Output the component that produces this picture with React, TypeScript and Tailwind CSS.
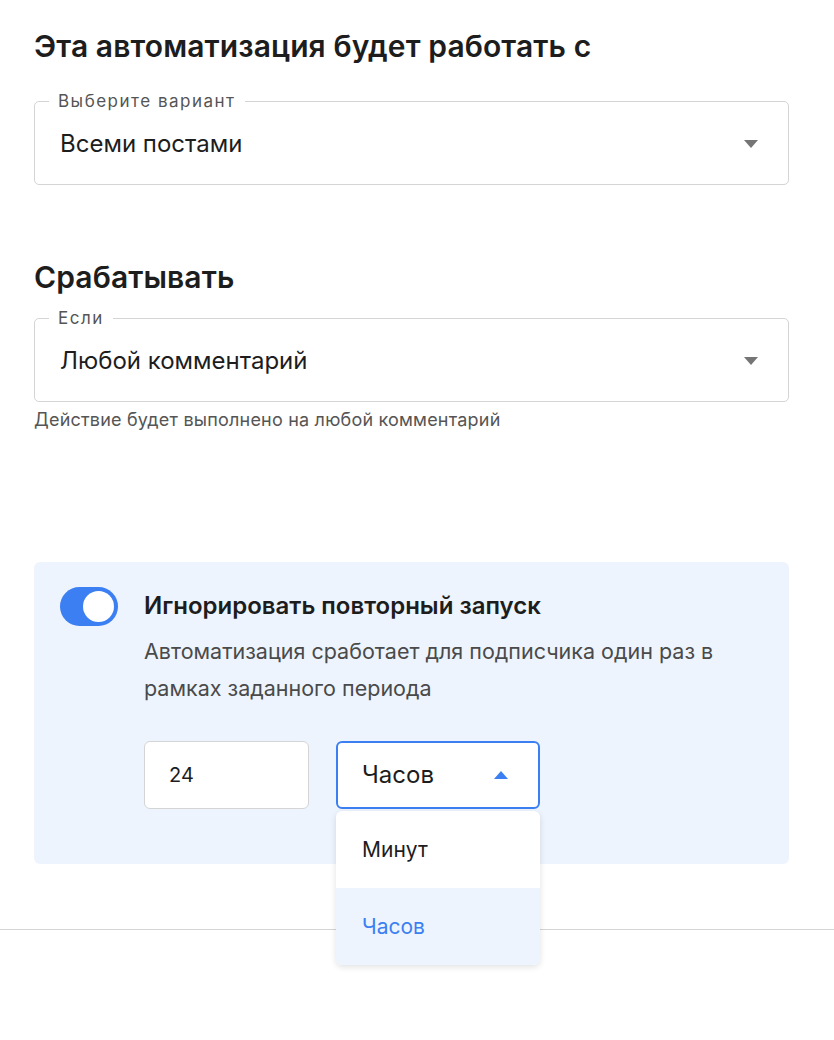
import { useState } from 'react'

interface OutlinedSelectProps {
  label: string
  value: string
}

function Caret({ up, className }: { up?: boolean; className: string }) {
  return (
    <svg width="14" height="8" viewBox="0 0 14 8" className={className}>
      {up ? <path d="M0 8 L7 0 L14 8 Z" fill="currentColor" /> : <path d="M0 0 L14 0 L7 8 Z" fill="currentColor" />}
    </svg>
  )
}

function OutlinedSelect({ label, value }: OutlinedSelectProps) {
  return (
    <fieldset className="border border-[#d4d4d4] rounded-[5px] px-[14px] h-[94px]">
      <legend className="px-[9px] text-[17px] leading-[20px] tracking-[1.5px] text-[#555]">{label}</legend>
      <div className="flex items-center justify-between pl-[11px] pr-[16px] mt-[19px]">
        <span className="text-[24px] leading-[28px] text-[#1d1d1d]">{value}</span>
        <Caret className="text-[#757575]" />
      </div>
    </fieldset>
  )
}

export default function App() {
  const [enabled, setEnabled] = useState(true)
  const [unit, setUnit] = useState('Часов')

  return (
    <div className="w-[834px] h-[1040px] bg-white font-['Inter',sans-serif] text-[#1d1d1d]">
      <div className="ml-[34px] pt-[26px] w-[755px]">
        <h2 className="text-[30px] leading-[40px] font-semibold tracking-[0.1px]">Эта автоматизация будет работать с</h2>
        <div className="mt-[25px]">
          <OutlinedSelect label="Выберите вариант" value="Всеми постами" />
        </div>

        <h2 className="mt-[72px] text-[30px] leading-[40px] font-semibold tracking-[0.1px]">Срабатывать</h2>
        <div className="mt-[11px]">
          <OutlinedSelect label="Если" value="Любой комментарий" />
        </div>
        <p className="mt-[7px] text-[18px] leading-[22px] tracking-[0.2px] text-[#555]">Действие будет выполнено на любой комментарий</p>

        {/* repeat-run settings panel */}
        <div className="mt-[131px] bg-[#edf4fe] rounded-[6px] h-[302px] flex gap-[26px] pl-[26px] pt-[25px]">
          <button
            onClick={() => setEnabled(!enabled)}
            className={`w-[58px] h-[39px] rounded-full p-[4px] flex shrink-0 ${enabled ? 'bg-[#3b7ff2] justify-end' : 'bg-[#c8c8c8] justify-start'}`}
          >
            <span className="w-[31px] h-[31px] rounded-full bg-white block" />
          </button>
          <div className="flex flex-col">
            <div className="text-[24px] leading-[38px] font-semibold text-[#1d1d1d]">Игнорировать повторный запуск</div>
            <p className="mt-[8px] text-[21.5px] leading-[37px] text-[#4a4a4a] w-[610px]">
              Автоматизация сработает для подписчика один раз в рамках заданного периода
            </p>
            <div className="mt-[34px] flex gap-[27px]">
              <div className="w-[165px] h-[68px] bg-white border border-[#d4d4d4] rounded-[6px] flex items-center px-[24px] text-[20px] text-[#1d1d1d]">24</div>
              <div className="relative">
                <div className="w-[204px] h-[68px] bg-white border-2 border-[#3b7ff2] rounded-[6px] flex items-center justify-between pl-[24px] pr-[30px] text-[24px] text-[#1d1d1d]">
                  <span>{unit}</span>
                  <Caret up className="text-[#3b7ff2]" />
                </div>
                <ul className="absolute left-0 top-[70px] w-[204px] bg-white rounded-[6px] shadow-[0_2px_6px_rgba(0,0,0,0.12)] overflow-hidden z-10">
                  {['Минут', 'Часов'].map((u) => (
                    <li
                      key={u}
                      onClick={() => setUnit(u)}
                      className={`h-[77px] flex items-center pl-[26px] text-[21px] ${u === unit ? 'bg-[#edf4fe] text-[#3b7ff2]' : 'text-[#1d1d1d]'}`}
                    >
                      {u}
                    </li>
                  ))}
                </ul>
              </div>
            </div>
          </div>
        </div>
      </div>
      <div className="mt-[65px] border-t border-[#d4d4d4]" />
    </div>
  )
}
